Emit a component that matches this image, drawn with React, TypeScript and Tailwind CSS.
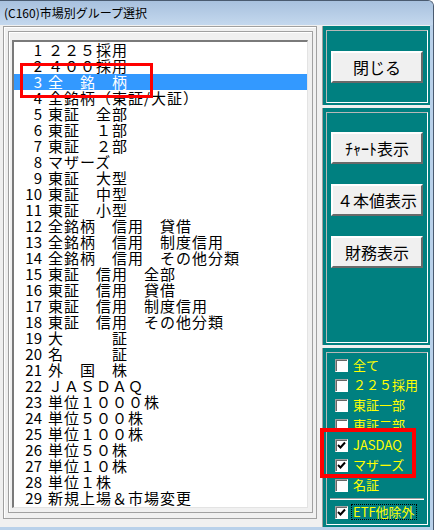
import React from "react";

const ROWS = [
  "２２５採用",
  "４００採用",
  "全　銘　柄",
  "全銘柄（東証/大証）",
  "東証　全部",
  "東証　１部",
  "東証　２部",
  "マザーズ",
  "東証　大型",
  "東証　中型",
  "東証　小型",
  "全銘柄　信用　貸借",
  "全銘柄　信用　制度信用",
  "全銘柄　信用　その他分類",
  "東証　信用　全部",
  "東証　信用　貸借",
  "東証　信用　制度信用",
  "東証　信用　その他分類",
  "大　　　証",
  "名　　　証",
  "外　国　株",
  "ＪＡＳＤＡＱ",
  "単位１０００株",
  "単位５００株",
  "単位１００株",
  "単位５０株",
  "単位１０株",
  "単位１株",
  "新規上場＆市場変更",
];

const CHECKS: { label: string; checked: boolean }[] = [
  { label: "全て", checked: false },
  { label: "２２５採用", checked: false },
  { label: "東証一部", checked: false },
  { label: "東証二部", checked: false },
  { label: "JASDAQ", checked: true },
  { label: "マザーズ", checked: true },
  { label: "名証", checked: false },
];

const FONT = "font-['Noto_Sans_CJK_JP',sans-serif]";

function Button({ label }: { label: string }) {
  return (
    <div className="mx-[4px] h-[32px] flex items-center justify-center bg-[#f0f0f0] border-2 border-t-white border-l-white border-b-[#696969] border-r-[#696969] text-[16px] leading-none text-black">
      {label}
    </div>
  );
}

function CheckBox({ checked }: { checked: boolean }) {
  return (
    <span className="w-[13px] h-[13px] shrink-0 bg-white border border-t-[#a0a0a0] border-l-[#a0a0a0] border-b-white border-r-white shadow-[inset_1px_1px_0_#696969] flex items-center justify-center">
      {checked && (
        <svg width="9" height="9" viewBox="0 0 9 9">
          <path d="M1 4 L3.5 6.5 L8 1.5" stroke="#000" strokeWidth="2" fill="none" />
        </svg>
      )}
    </span>
  );
}

function CheckRow({ label, checked, focus }: { label: string; checked: boolean; focus?: boolean }) {
  return (
    <div className="h-[20px] flex items-center pl-[8px] gap-[4px]">
      <CheckBox checked={checked} />
      <span
        className={`text-[13px] leading-[14px] text-[#ffff00] px-[1px] ${
          focus ? "outline-1 outline-dotted outline-black" : ""
        }`}
      >
        {label}
      </span>
    </div>
  );
}

function Panel({ className, children }: { className: string; children: React.ReactNode }) {
  return (
    <div className={`bg-[#008080] border-l border-l-[#a0a0a0] pl-[3px] pr-[2px] pt-[4px] pb-[2px] ${className}`}>
      <div className="h-full border border-t-[#b8b8b8] border-l-[#b8b8b8] border-b-white border-r-white">
        {children}
      </div>
    </div>
  );
}

export default function App() {
  return (
    <div className={`relative w-[434px] h-[530px] bg-white ${FONT}`}>
      <div className="w-[434px] h-[530px] rounded-tr-[6px] border-t border-r border-[#4a5b70] bg-[#b9d1ea] flex flex-col overflow-hidden">
        {/* Title bar */}
        <div className="h-[24px] shrink-0 bg-gradient-to-b from-[#a8c1de] to-[#c4d8ee] flex items-center pl-[4px] text-[12px] text-black">
          (C160)市場別グループ選択
        </div>

        {/* Body */}
        <div className="flex-1 mr-[3px] mb-[3px] bg-[#f0f0f0] flex gap-[5px] pl-[3px] pt-[1px]">
          {/* List group */}
          <div className="w-[314px] h-[493px] border border-[#a0a0a0] shadow-[inset_1px_1px_0_#fff] pl-[4px] pt-[4px]">
            <div className="w-[305px] h-[482px] border border-[#a0a0a0] shadow-[inset_1px_1px_0_#fff] pl-[3px] pt-[8px]">
              <div className="w-[296px] h-[468px] bg-white border-t-2 border-l-2 border-t-[#7a7a7a] border-l-[#7a7a7a] border-r border-b border-r-[#e3e3e3] border-b-[#e3e3e3] overflow-hidden">
                {ROWS.map((r, i) => (
                  <div
                    key={i}
                    className={`h-[16px] flex items-center text-[15px] leading-[16px] whitespace-nowrap ${
                      i === 2 ? "bg-[#3399ff] text-white" : "text-black"
                    }`}
                  >
                    <span className="w-[28px] text-right">{i + 1}</span>
                    <span className="ml-[6px] tracking-[1px]">{r}</span>
                  </div>
                ))}
              </div>
            </div>
          </div>

          {/* Right column */}
          <div className="w-[108px] flex flex-col gap-[3px]">
            <Panel className="h-[79px]">
              <div className="h-full flex flex-col justify-center">
                <Button label="閉じる" />
              </div>
            </Panel>
            <Panel className="h-[237px]">
              <div className="pt-[19px] flex flex-col gap-[20px]">
                <Button label="ﾁｬｰﾄ表示" />
                <Button label="４本値表示" />
                <Button label="財務表示" />
              </div>
            </Panel>
            <Panel className="flex-1">
              <div className="pt-[2px] flex flex-col">
                {CHECKS.map((c) => (
                  <CheckRow key={c.label} label={c.label} checked={c.checked} />
                ))}
                <div className="mx-[3px] mt-[3px] mb-[2px] h-[2px] border-t border-t-[#a0a0a0] border-b border-b-white" />
                <CheckRow label="ETF他除外" checked focus />
              </div>
            </Panel>
          </div>
        </div>
      </div>

      {/* Red annotation boxes */}
      <div className="absolute left-[20px] top-[63px] w-[133px] h-[35px] border-[3px] border-[#ff0000]" />
      <div className="absolute left-[320px] top-[428px] w-[96px] h-[50px] border-4 border-[#ff0000]" />
    </div>
  );
}
